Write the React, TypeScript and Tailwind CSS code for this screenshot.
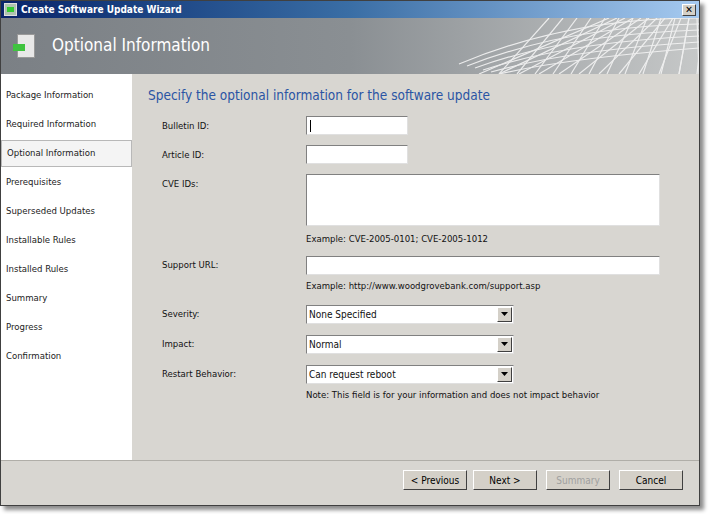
import React from "react";

const Sel = ({ v }: { v: string }) => (
  <div className="w-[208px] h-[19px] bg-white border border-[#808080] border-b-[#e0e0e0] border-r-[#e0e0e0] flex items-center">
    <span className="flex-1 pl-[2px] text-[10px]">{v}</span>
    <div className="w-[15px] h-[15px] mr-[1px] bg-[#d4d0c8] border border-white border-b-[#404040] border-r-[#404040] flex items-center justify-center">
      <svg width="7" height="4" viewBox="0 0 7 4"><path d="M0 0h7L3.5 4z" fill="#000" /></svg>
    </div>
  </div>
);
const Inp = ({ w, h = 19, caret }: { w: string; h?: number; caret?: boolean }) => (
  <div className={`${w} bg-white border border-[#808080] border-b-[#e0e0e0] border-r-[#e0e0e0] flex items-center`} style={{ height: h }}>
    {caret && <div className="ml-[3px] w-px h-[12px] bg-black" />}
  </div>
);
const Btn = ({ t, dis }: { t: string; dis?: boolean }) => (
  <div className={`w-[64px] h-[20px] bg-[#d4d0c8] border border-white border-b-[#404040] border-r-[#404040] flex items-center justify-center text-[10px] ${dis ? "text-[#a0a0a0]" : "text-black"}`}>{t}</div>
);

export default function App() {
  const steps = ["Package Information","Required Information","Optional Information","Prerequisites","Superseded Updates","Installable Rules","Installed Rules","Summary","Progress","Confirmation"];
  return (
    <div className="w-[710px] h-[514px] bg-white" style={{ fontFamily: "'DejaVu Sans Condensed','DejaVu Sans',sans-serif" }}>
      <div className="w-[700px] h-[506px] border border-[#404040] shadow-[4px_4px_4px_rgba(0,0,0,0.45)] flex flex-col bg-[#d8d6d1]">
        <div className="h-[17px] flex items-center bg-gradient-to-r from-[#0a246a] via-[#3a6ea5] to-[#a6caf0] px-[3px]">
          <div className="w-[13px] h-[13px] bg-[#b0c4b0] border border-[#e0e0e0] flex items-center justify-center"><div className="w-[7px] h-[5px] bg-[#3c3]" /></div>
          <span className="ml-[4px] text-white font-bold text-[10px]">Create Software Update Wizard</span>
          <div className="ml-auto w-[14px] h-[12px] bg-[#d4d0c8] border border-white border-b-[#404040] border-r-[#404040] flex items-center justify-center text-[10px] font-bold leading-none">✕</div>
        </div>
        <div className="h-[56px] bg-gradient-to-r from-[#7b8085] via-[#8a8f93] to-[#c6c8c8] flex items-center relative overflow-hidden">
          <svg className="absolute right-0 top-0" width="260" height="56" viewBox="0 0 260 56">
            <g stroke="#f4f4f4" strokeWidth="1.2" fill="none" opacity="0.9">
              {Array.from({ length: 12 }).map((_, i) => <path key={"a"+i} d={`M${60 + i * 18} 56 L${110 + i * 14} 0`} />)}
              {Array.from({ length: 12 }).map((_, i) => <path key={"b"+i} d={`M${40 + i * 20} 56 L${170 + i * 8} 0`} />)}
              {Array.from({ length: 6 }).map((_, i) => <path key={"c"+i} d={`M${60 - i * 8} ${56 - i * 2} Q${130} ${40 - i * 8} 260 ${30 - i * 6}`} />)}
            </g>
          </svg>
          <div className="ml-[16px] w-[18px] h-[24px] bg-[#e8e8e8] border border-[#999] relative">
            <div className="absolute -left-[5px] top-[9px] w-[12px] h-[7px] bg-[#3fc43f]" />
          </div>
          <span className="ml-[17px] text-white text-[17px] relative">Optional Information</span>
        </div>
        <div className="flex flex-1">
          <div className="w-[131px] bg-white pt-[8px] flex flex-col">
            {steps.map((s) => (
              <div key={s} className={`h-[27px] mb-[2px] flex items-center pl-[5px] text-[9.5px] text-[#222] ${s === "Optional Information" ? "border border-[#b8b8b8] bg-[#f4f4f4]" : ""}`}>{s}</div>
            ))}
          </div>
          <div className="flex-1 flex flex-col">
            <div className="flex-1 pl-[16px]">
              <div className="mt-[11px] text-[13.5px] text-[#2a54a4]">Specify the optional information for the software update</div>
              <div className="text-[9.5px] text-[#111]">
                <div className="flex mt-[11px] items-center"><span className="w-[158px] pl-[14px]">Bulletin ID:</span><Inp w="w-[102px]" caret /></div>
                <div className="flex mt-[10px] items-center"><span className="w-[158px] pl-[14px]">Article ID:</span><Inp w="w-[102px]" /></div>
                <div className="flex mt-[10px]"><span className="w-[158px] pl-[14px] pt-[3px]">CVE IDs:</span><Inp w="w-[354px]" h={52} /></div>
                <div className="ml-[158px] mt-[6px]">Example: CVE-2005-0101; CVE-2005-1012</div>
                <div className="flex mt-[9px] items-center"><span className="w-[158px] pl-[14px]">Support URL:</span><Inp w="w-[354px]" /></div>
                <div className="ml-[158px] mt-[4px]">Example: http://www.woodgrovebank.com/support.asp</div>
                <div className="flex mt-[12px] items-center"><span className="w-[158px] pl-[14px]">Severity:</span><Sel v="None Specified" /></div>
                <div className="flex mt-[11px] items-center"><span className="w-[158px] pl-[14px]">Impact:</span><Sel v="Normal" /></div>
                <div className="flex mt-[11px] items-center"><span className="w-[158px] pl-[14px]">Restart Behavior:</span><Sel v="Can request reboot" /></div>
                <div className="ml-[158px] mt-[4px]">Note: This field is for your information and does not impact behavior</div>
              </div>
            </div>
          </div>
        </div>
        <div className="h-[45px] border-t border-[#b0aea8] bg-[#d8d6d1] flex items-center justify-end pr-[16px] pb-[6px]">
          <Btn t="< Previous" /><div className="w-[6px]" /><Btn t="Next >" /><div className="w-[9px]" /><Btn t="Summary" dis /><div className="w-[9px]" /><Btn t="Cancel" />
        </div>
      </div>
    </div>
  );
}
